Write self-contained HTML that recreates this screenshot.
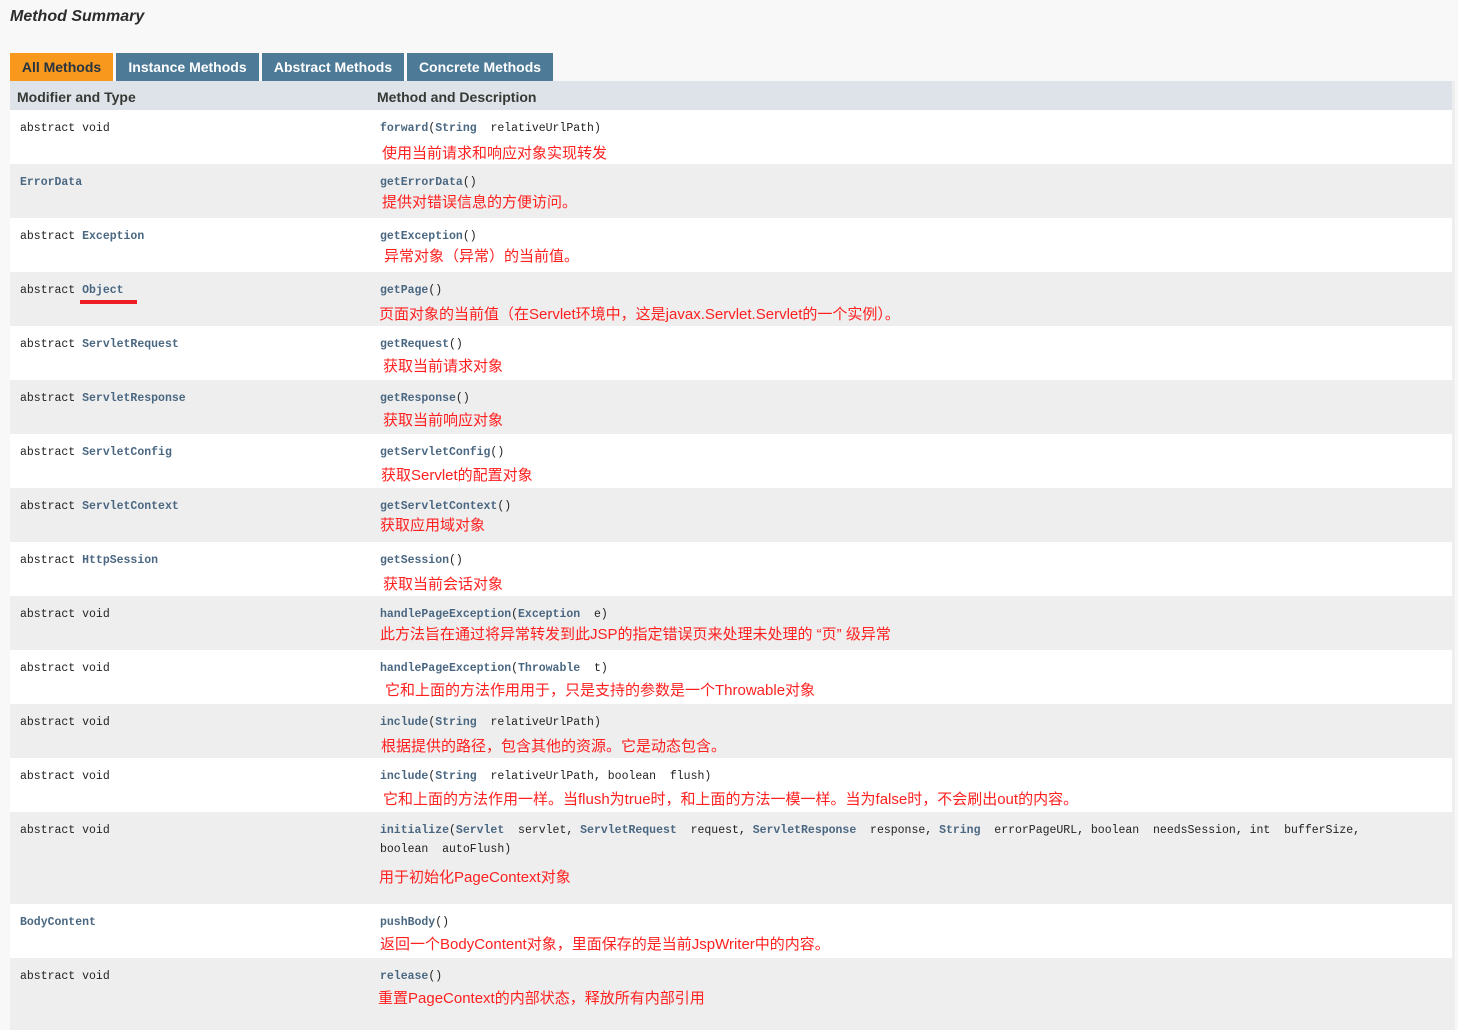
<!DOCTYPE html>
<html><head><meta charset="utf-8"><style>
body{margin:0;width:1458px;height:1030px;background:#f8f8f8;overflow:hidden;position:relative;font-family:"Liberation Sans",sans-serif}
.a{position:absolute;white-space:nowrap}
h3{position:absolute;left:10px;top:8px;margin:0;font-size:16px;font-style:italic;font-weight:bold;color:#2c2c2c}
.tab{position:absolute;top:53px;height:28px;line-height:28px;text-align:center;font-size:14px;font-weight:bold;color:#fff;background:#4d7a97}
.hdr{position:absolute;left:10px;top:81px;width:1442px;height:29px;background:#dee3e9;font-size:14px;font-weight:bold;color:#353833}
.row{position:absolute;left:10px;width:1442px}
.c{position:absolute;font-family:"Liberation Mono",monospace;font-size:11.5px;color:#222;white-space:pre;line-height:19px}
.l{color:#4a6782;font-weight:bold}
.r{position:absolute;font-family:"Liberation Sans","Noto Sans CJK SC",sans-serif;font-size:15px;color:#ff2020;white-space:nowrap;line-height:20px}
.edge{position:absolute;left:1452px;top:81px;width:3px;height:949px;background:#eee}
</style></head><body>
<h3>Method Summary</h3>
<div class="tab" style="left:10px;width:103px;background:#f8981d;color:#253441">All Methods</div>
<div class="tab" style="left:116px;width:143px">Instance Methods</div>
<div class="tab" style="left:262px;width:142px">Abstract Methods</div>
<div class="tab" style="left:407px;width:146px">Concrete Methods</div>
<div class="hdr"><span class="a" style="left:7px;top:8px">Modifier and Type</span><span class="a" style="left:367px;top:8px">Method and Description</span></div>
<div class="edge"></div>

<div class="row" style="top:110px;height:54px;background:#fff"><div class="c" style="left:10px;top:9px">abstract void</div><div class="c" style="left:370px;top:9px"><span class="l">forward</span>(<span class="l">String</span>  relativeUrlPath)</div><div class="r" style="left:372px;top:34px">使用当前请求和响应对象实现转发</div></div>
<div class="row" style="top:164px;height:54px;background:#eee"><div class="c" style="left:10px;top:9px"><span class="l">ErrorData</span></div><div class="c" style="left:370px;top:9px"><span class="l">getErrorData</span>()</div><div class="r" style="left:372px;top:29px">提供对错误信息的方便访问。</div></div>
<div class="row" style="top:218px;height:54px;background:#fff"><div class="c" style="left:10px;top:9px">abstract <span class="l">Exception</span></div><div class="c" style="left:370px;top:9px"><span class="l">getException</span>()</div><div class="r" style="left:374px;top:29px">异常对象（异常）的当前值。</div></div>
<div class="row" style="top:272px;height:54px;background:#eee"><div class="c" style="left:10px;top:9px">abstract <span class="l">Object</span></div><div style="position:absolute;left:70px;top:28px;width:57px;height:4px;background:#ee1c25"></div><div class="c" style="left:370px;top:9px"><span class="l">getPage</span>()</div><div class="r" style="left:369px;top:33px">页面对象的当前值（在Servlet环境中，这是javax.Servlet.Servlet的一个实例）。</div></div>
<div class="row" style="top:326px;height:54px;background:#fff"><div class="c" style="left:10px;top:9px">abstract <span class="l">ServletRequest</span></div><div class="c" style="left:370px;top:9px"><span class="l">getRequest</span>()</div><div class="r" style="left:373px;top:31px">获取当前请求对象</div></div>
<div class="row" style="top:380px;height:54px;background:#eee"><div class="c" style="left:10px;top:9px">abstract <span class="l">ServletResponse</span></div><div class="c" style="left:370px;top:9px"><span class="l">getResponse</span>()</div><div class="r" style="left:373px;top:31px">获取当前响应对象</div></div>
<div class="row" style="top:434px;height:54px;background:#fff"><div class="c" style="left:10px;top:9px">abstract <span class="l">ServletConfig</span></div><div class="c" style="left:370px;top:9px"><span class="l">getServletConfig</span>()</div><div class="r" style="left:371px;top:32px">获取Servlet的配置对象</div></div>
<div class="row" style="top:488px;height:54px;background:#eee"><div class="c" style="left:10px;top:9px">abstract <span class="l">ServletContext</span></div><div class="c" style="left:370px;top:9px"><span class="l">getServletContext</span>()</div><div class="r" style="left:370px;top:28px">获取应用域对象</div></div>
<div class="row" style="top:542px;height:54px;background:#fff"><div class="c" style="left:10px;top:9px">abstract <span class="l">HttpSession</span></div><div class="c" style="left:370px;top:9px"><span class="l">getSession</span>()</div><div class="r" style="left:373px;top:33px">获取当前会话对象</div></div>
<div class="row" style="top:596px;height:54px;background:#eee"><div class="c" style="left:10px;top:9px">abstract void</div><div class="c" style="left:370px;top:9px"><span class="l">handlePageException</span>(<span class="l">Exception</span>  e)</div><div class="r" style="left:370px;top:29px">此方法旨在通过将异常转发到此JSP的指定错误页来处理未处理的 “页” 级异常</div></div>
<div class="row" style="top:650px;height:54px;background:#fff"><div class="c" style="left:10px;top:9px">abstract void</div><div class="c" style="left:370px;top:9px"><span class="l">handlePageException</span>(<span class="l">Throwable</span>  t)</div><div class="r" style="left:375px;top:31px">它和上面的方法作用用于，只是支持的参数是一个Throwable对象</div></div>
<div class="row" style="top:704px;height:54px;background:#eee"><div class="c" style="left:10px;top:9px">abstract void</div><div class="c" style="left:370px;top:9px"><span class="l">include</span>(<span class="l">String</span>  relativeUrlPath)</div><div class="r" style="left:371px;top:33px">根据提供的路径，包含其他的资源。它是动态包含。</div></div>
<div class="row" style="top:758px;height:54px;background:#fff"><div class="c" style="left:10px;top:9px">abstract void</div><div class="c" style="left:370px;top:9px"><span class="l">include</span>(<span class="l">String</span>  relativeUrlPath, boolean  flush)</div><div class="r" style="left:373px;top:32px">它和上面的方法作用一样。当flush为true时，和上面的方法一模一样。当为false时，不会刷出out的内容。</div></div>
<div class="row" style="top:812px;height:92px;background:#eee"><div class="c" style="left:10px;top:9px">abstract void</div><div class="c" style="left:370px;top:9px;line-height:19px"><span class="l">initialize</span>(<span class="l">Servlet</span>  servlet, <span class="l">ServletRequest</span>  request, <span class="l">ServletResponse</span>  response, <span class="l">String</span>  errorPageURL, boolean  needsSession, int  bufferSize,
boolean  autoFlush)</div><div class="r" style="left:369px;top:56px">用于初始化PageContext对象</div></div>
<div class="row" style="top:904px;height:54px;background:#fff"><div class="c" style="left:10px;top:9px"><span class="l">BodyContent</span></div><div class="c" style="left:370px;top:9px"><span class="l">pushBody</span>()</div><div class="r" style="left:370px;top:31px">返回一个BodyContent对象，里面保存的是当前JspWriter中的内容。</div></div>
<div class="row" style="top:958px;height:72px;background:#eee"><div class="c" style="left:10px;top:9px">abstract void</div><div class="c" style="left:370px;top:9px"><span class="l">release</span>()</div><div class="r" style="left:368px;top:31px">重置PageContext的内部状态，释放所有内部引用</div></div>
</body></html>
